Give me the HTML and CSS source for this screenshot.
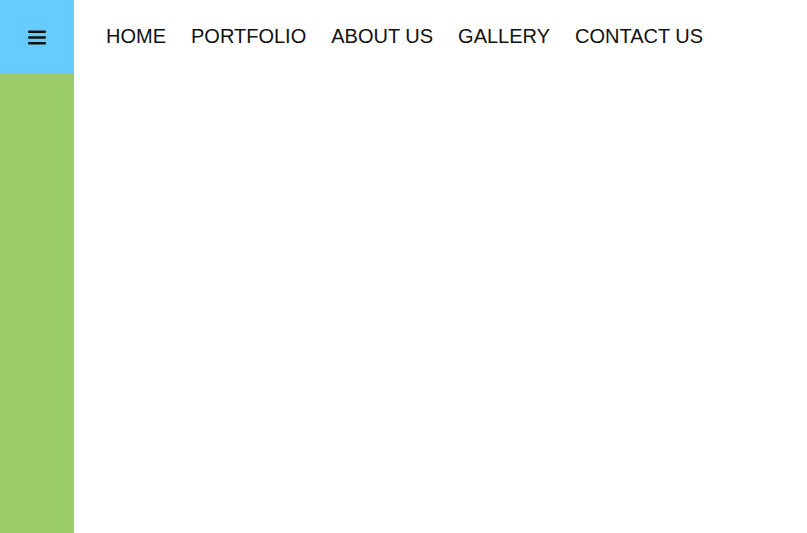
FILE: index.html
```html
<!DOCTYPE html>
<html>
<head>
<meta charset="utf-8">
<link rel="stylesheet" href="styles.css">
</head>
<body>
<div class="page">
  <aside class="sidebar">
    <div class="menu-btn">
      <svg width="18" height="16" viewBox="0 0 18 16" aria-hidden="true">
        <rect x="0" y="1.5" width="18" height="2.6" rx="1" fill="#111"/>
        <rect x="0" y="7.2" width="18" height="2.6" rx="1" fill="#111"/>
        <rect x="0" y="13" width="18" height="2.6" rx="1" fill="#111"/>
      </svg>
    </div>
  </aside>
  <nav class="nav">
    <a class="nav-link" href="#">HOME</a>
    <a class="nav-link" href="#">PORTFOLIO</a>
    <a class="nav-link" href="#">ABOUT US</a>
    <a class="nav-link" href="#">GALLERY</a>
    <a class="nav-link" href="#">CONTACT US</a>
  </nav>
</div>
</body>
</html>
```

FILE: styles.css
```css
html, body {
  margin: 0;
  padding: 0;
  background: #ffffff;
}
.page {
  display: flex;
  height: 533px;
  font-family: "Liberation Sans", Arial, sans-serif;
}
.sidebar {
  width: 74px;
  flex: none;
  background: #99cc66;
  display: flex;
  flex-direction: column;
}
.menu-btn {
  height: 74px;
  background: #66ccff;
  display: flex;
  align-items: center;
  justify-content: center;
}
.menu-btn svg {
  display: block;
  margin-top: -1px;
}
.nav {
  height: 72px;
  padding-bottom: 2px;
  display: flex;
  align-items: center;
  gap: 25px;
  padding-left: 32px;
}
.nav-link {
  font-size: 20px;
  line-height: 23px;
  color: #111111;
  text-decoration: none;
}
```
